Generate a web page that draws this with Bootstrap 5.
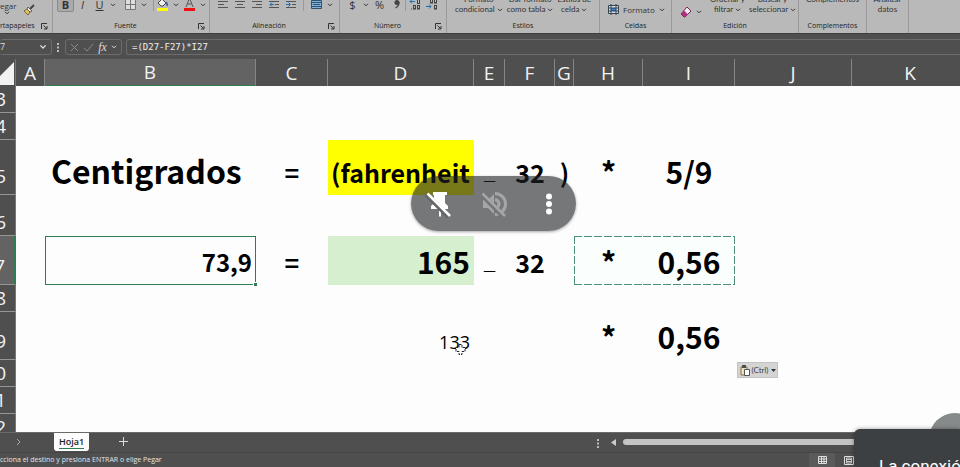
<!DOCTYPE html>
<html lang="es" data-bs-theme="light">
<head>
<meta charset="utf-8">
<meta name="viewport" content="width=device-width, initial-scale=1">
<title>Hoja1</title>
<link href="https://cdn.jsdelivr.net/npm/bootstrap@5.3.0/dist/css/bootstrap.min.css" rel="stylesheet">
<style>
  body { font-family: "Open Sans", "Noto Sans", sans-serif; background: #4f4f4f; }
  button { padding: 0; border: 0; background: none; color: inherit; line-height: 1; }
  svg { display: block; flex: none; }

  .ribbon { height: 34px; background: #b9b9b9; color: #333; font-size: 8px; line-height: 10px; }
  .rgroup { border-right: 1px solid #9a9a9a; flex: none; }
  .rgroup-name { height: 14px; flex: none; font-size: 7px; line-height: 14px; color: #222; }
  .launch { width: 11px; }
  .tools { height: 22px; flex: none; }
  .tool, .drop { height: 15px; display: flex; align-items: center; justify-content: center; font-size: 11px; }
  .tool { width: 17px; }
  .tool.on { background: #aaa; border: 1px solid #8a8a8a; border-radius: 2px; font-weight: 700; }
  .drop { width: 10px; }
  .split { width: 1px; height: 14px; background: #9a9a9a; }
  .big { flex: none; text-align: center; white-space: nowrap; font-family: Lato, sans-serif; line-height: 10px; height: 30px; }
  .w-clip { width: 53px; } .w-font { width: 157px; } .w-align { width: 130px; } .w-num { width: 107px; }
  .w-style { width: 153px; } .w-cell { width: 72px; } .w-edit { width: 127px; } .w-add { width: 68px; } .w-data { width: 42px; }

  .fbar { height: 26px; padding: 6px 0 5px; border-top: 1px solid #3e3e3e; color: #ddd; }
  .fbox { border: 1px solid #6c6c6c; border-radius: 3px; height: 16px; }
  .namebox { width: 52px; border-left: 0; font-size: 9px; }
  .fx-box { width: 57px; }
  .fx { font: italic 400 12px "Liberation Serif", serif; }
  .formula { background: transparent; color: #f0f0f0; font: 9px "DejaVu Sans Mono", monospace; padding: 0 5px; min-width: 0; border-right: 0; border-radius: 3px 0 0 3px; }

  .grid-wrap { background: #fdfdfd; min-height: 0; }
  .sheet { table-layout: fixed; width: 100%; border-collapse: separate; border-spacing: 0; color: #000; }
  .sheet th { background: #4f4f4f; color: #f2f2f2; font-weight: 400; font-size: 19px; line-height: 26px; padding: 0; }
  .sheet thead th { height: 27px; text-align: center; border-right: 1px solid #858585; }
  .sheet thead th.sel { background: #636363; border-bottom: 1px solid #2d7d50; }
  .sheet thead th.last { padding-left: 8px; border: 0; }
  .sheet thead th.corner { border-right: 1px solid #777; }
  .sheet tbody th { border-bottom: 1px solid #969696; border-right: 1px solid #777; vertical-align: bottom; }
  .sheet tbody th.sel { background: #636363; border-right: 2px solid #2d7d50; }
  .rownum { display: flex; justify-content: flex-end; overflow: hidden; padding-right: 9px; line-height: 26px; height: 26px; }
  .tall .rownum { height: 31px; }
  .sheet td { padding: 0 4px; vertical-align: bottom; font-family: "Noto Sans CJK SC", sans-serif; font-weight: 700; line-height: 40px; white-space: nowrap; }
  .r27 { height: 27px; } .r41 { height: 41px; } .r48 { height: 48px; } .r49 { height: 49px; } .r55 { height: 55px; }
  .c-head { width: 16px; } .c-a { width: 29px; } .c-b { width: 211px; } .c-c { width: 72px; } .c-d { width: 146px; }
  .c-e { width: 31px; } .c-f { width: 50px; } .c-g { width: 19px; } .c-h { width: 69px; } .c-i { width: 92px; } .c-j { width: 117px; }
  .sheet td.t32 { font-size: 32px; padding: 0 4px 5px 6px; }
  .sheet td.t30 { font-size: 30px; padding-bottom: 4px; }
  .sheet td.t25 { font-size: 25px; padding-bottom: 3px; }
  .sheet td.under { font-family: "Liberation Sans", sans-serif; font-size: 20px; padding-bottom: 3px; }
  .sheet td.plain { font-family: "Open Sans", sans-serif; font-weight: 400; font-size: 18px; line-height: 36px; }
  .sheet td.yellow { background: #ff0; padding-left: 3px; }
  .sheet td.green { background: #d6f0cf; }
  .sheet td.active { box-shadow: inset 0 0 0 1px #2d7d50; position: relative; font-size: 24px; }
  .grip { position: absolute; right: -1px; bottom: -1px; width: 4px; height: 4px; background: #2d7d50; border: 1px solid #fdfdfd; border-width: 1px 0 0 1px; }
  .sheet td.copy-l, .sheet td.copy-r {
    --dx: repeating-linear-gradient(90deg, #4f9074 0 8px, transparent 8px 10px);
    --dy: repeating-linear-gradient(180deg, #4f9074 0 8px, transparent 8px 10px);
    background-color: #fafefd; background-repeat: no-repeat;
    background-image: var(--dx), var(--dx), var(--dy);
    background-size: 100% 1px, 100% 1px, 1px 100%;
  }
  .sheet td.copy-l { background-position: top, bottom, left; }
  .sheet td.copy-r { background-position: top, bottom, right; }

  .meet { position: absolute; left: 411px; top: 176px; width: 165px; height: 55px; border-radius: 28px; background: rgba(32, 34, 37, .61); box-shadow: 0 1px 3px rgba(0, 0, 0, .35); color: #fff; }
  .paste { position: absolute; left: 737px; top: 362px; width: 41px; height: 16px; background: #d4d4d4; border: 1px solid #c2c2c2; color: #444; font-family: Lato, sans-serif; font-size: 8px; gap: 2px; }
  .pointer { position: absolute; left: 455px; top: 343px; }

  .tabs { height: 21px; border-top: 1px solid #6a6a6a; color: #ddd; }
  .tabs > button { height: 18px; }
  .tabs > .tab-on { width: 35px; margin: 0 30px 0 32px; background: #fdfdfd; color: #222; border-radius: 0 0 3px 3px; font-size: 9px; font-weight: 600; }
  .tab-on span { border-bottom: 1px solid #2d7d50; line-height: 13px; }
  .hscroll { width: 364px; padding: 6px 106px 0 0; }
  .thumb { height: 6px; background: #c4c4c4; border-radius: 3px 0 0 3px; }
  .status { height: 15px; border-top: 1px solid #454545; color: #e4e4e4; font-size: 7px; line-height: 14px; }
  .views { padding-right: 106px; gap: 9px; }
  .view-on { background: #5a5a5a; width: 26px; height: 14px; }
  .toast-box { position: absolute; right: 0; bottom: 0; width: 106px; height: 38px; background: #3c4043; border-radius: 6px 0 0 0; color: #fff; font: 17px/20px Roboto, sans-serif; padding: 27px 0 0 25px; box-shadow: 0 0 4px rgba(0, 0, 0, .4); }
  .bubble { position: absolute; right: -21px; bottom: 2px; width: 52px; height: 52px; border-radius: 50%; background: #868a8b; }
</style>
<script src="https://cdn.jsdelivr.net/npm/bootstrap@5.3.0/dist/js/bootstrap.bundle.min.js"></script>
</head>
<body class="m-0 overflow-hidden">
<svg width="0" height="0" class="position-absolute" aria-hidden="true">
  <symbol id="chev" viewBox="0 0 6 4"><path d="M1 .8 3 2.8 5 .8" fill="none" stroke="currentColor"/></symbol>
  <symbol id="launch" viewBox="0 0 7 7"><path d="M.5 6V.5H6M2.5 2.5l3 3M6 3v3H3" fill="none" stroke="#333"/></symbol>
</svg>
<div class="d-flex flex-column vh-100 position-relative overflow-hidden">

  <header class="ribbon d-flex overflow-hidden">
    <section class="rgroup w-clip d-flex flex-column justify-content-end">
      <div class="tools d-flex align-items-center">
        <div class="d-flex flex-column align-items-start">
          <span>egar</span>
          <svg class="ms-1" width="6" height="4"><use href="#chev"/></svg>
        </div>
        <button class="tool ms-1 mt-1" aria-label="Copiar formato"><svg width="12" height="12" viewBox="0 0 12 12"><path d="M11 1 7 5" stroke="#444" stroke-width="2"/><path d="m5 3 4 4-2 1-3-3z" fill="#eee" stroke="#444" stroke-width=".8"/><path d="M4 5 1 7l4 4 2-3z" fill="#e0c060" stroke="#665522" stroke-width=".8"/></svg></button>
      </div>
      <div class="rgroup-name d-flex align-items-center"><span class="flex-fill">rtapapeles</span><button class="launch" aria-label="Portapapeles"><svg width="7" height="7"><use href="#launch"/></svg></button></div>
    </section>

    <section class="rgroup w-font d-flex flex-column justify-content-end">
      <div class="tools d-flex align-items-start ps-1">
        <button class="tool on">B</button><button class="tool fst-italic">I</button><button class="tool text-decoration-underline">U</button>
        <button class="drop" aria-label="Subrayado"><svg width="6" height="4"><use href="#chev"/></svg></button>
        <button class="tool ms-1" aria-label="Bordes"><svg width="11" height="11" viewBox="0 0 11 11"><path d="M.5 .5h10v10H.5zM5.500 .5v10M.5 5.500h10" fill="#ddd" stroke="#777"/></svg></button>
        <button class="drop" aria-label="Más bordes"><svg width="6" height="4"><use href="#chev"/></svg></button>
        <span class="split ms-1"></span>
        <button class="tool" aria-label="Color de relleno"><svg width="12" height="13" viewBox="0 0 12 13"><path d="m5 1 4 4-3 3H4L1 5z" fill="#eee" stroke="#444"/><path d="M9 4q2 2 1 4" fill="none" stroke="#27609a" stroke-width="1.500"/><path d="M0 10h11v3H0z" fill="#ff0"/></svg></button>
        <button class="drop" aria-label="Más colores"><svg width="6" height="4"><use href="#chev"/></svg></button>
        <button class="tool" aria-label="Color de fuente"><svg width="12" height="13" viewBox="0 0 12 13"><path d="M2 9 5.500 0 9 9M3.500 6h4" fill="none" stroke="#555"/><path d="M0 10h11v3H0z" fill="#f01010"/></svg></button>
        <button class="drop" aria-label="Más colores de fuente"><svg width="6" height="4"><use href="#chev"/></svg></button>
      </div>
      <div class="rgroup-name d-flex align-items-center"><span class="flex-fill text-center">Fuente</span><button class="launch" aria-label="Fuente"><svg width="7" height="7"><use href="#launch"/></svg></button></div>
    </section>

    <section class="rgroup w-align d-flex flex-column justify-content-end">
      <div class="tools d-flex align-items-start ps-1">
        <button class="tool" aria-label="Izquierda"><svg width="10" height="9" viewBox="0 0 10 9"><path d="M0 1.500h10M0 4.500h6M0 7.500h10" stroke="#555"/></svg></button>
        <button class="tool" aria-label="Centrar"><svg width="10" height="9" viewBox="0 0 10 9"><path d="M0 1.500h10M2 4.500h6M0 7.500h10" stroke="#555"/></svg></button>
        <button class="tool" aria-label="Derecha"><svg width="10" height="9" viewBox="0 0 10 9"><path d="M0 1.500h10M4 4.500h6M0 7.500h10" stroke="#555"/></svg></button>
        <button class="tool" aria-label="Disminuir sangría"><svg width="10" height="9" viewBox="0 0 10 9"><path d="M0 1.500h10M6 4.500h4M0 7.500h10" stroke="#555"/><path d="M5 4.500H1M3 2.500l-2 2 2 2" fill="none" stroke="#1f6fb5"/></svg></button>
        <button class="tool" aria-label="Aumentar sangría"><svg width="10" height="9" viewBox="0 0 10 9"><path d="M0 1.500h10M6 4.500h4M0 7.500h10" stroke="#555"/><path d="M0 4.500h4M2.500 2.500l2 2-2 2" fill="none" stroke="#1f6fb5"/></svg></button>
        <span class="split ms-1"></span>
        <button class="tool ms-1" aria-label="Combinar"><svg width="11" height="10" viewBox="0 0 11 10"><path d="M.5 .5h10v8H.5z" fill="#7fb2df" stroke="#33526e"/><path d="M2 4.500h7M.5 2.500h10M.5 6.500h10" stroke="#33526e"/></svg></button>
        <button class="drop" aria-label="Más combinar"><svg width="6" height="4"><use href="#chev"/></svg></button>
      </div>
      <div class="rgroup-name d-flex align-items-center"><span class="flex-fill text-center">Alineación</span><button class="launch" aria-label="Alineación"><svg width="7" height="7"><use href="#launch"/></svg></button></div>
    </section>

    <section class="rgroup w-num d-flex flex-column justify-content-end">
      <div class="tools d-flex align-items-start ps-1">
        <button class="tool">$</button><button class="drop" aria-label="Moneda"><svg width="6" height="4"><use href="#chev"/></svg></button>
        <button class="tool">%</button><button class="tool" aria-label="Millares"><svg width="6" height="9" viewBox="0 0 6 9"><circle cx="3" cy="2.500" r="2.500" fill="#444"/><path d="M5 2.500Q5 6 1.500 8" fill="none" stroke="#444" stroke-width="1.300"/></svg></button>
        <span class="split"></span>
        <button class="tool" aria-label="Aumentar decimales"><svg width="12" height="11" viewBox="0 0 12 11"><path d="M6 2.500H1M3 .5l-2 2 2 2" fill="none" stroke="#1f6fb5"/><g fill="none" stroke="#444"><rect x="8.500" y=".5" width="2" height="4"/><rect x="4.500" y="6.500" width="2" height="3.500"/><rect x="8.500" y="6.500" width="2" height="3.500"/><path d="M2 10h1"/></g></svg></button>
        <button class="tool" aria-label="Disminuir decimales"><svg width="12" height="11" viewBox="0 0 12 11"><path d="M0 7.500h5M3 5.500l2 2-2 2" fill="none" stroke="#1f6fb5"/><g fill="none" stroke="#444"><rect x="4.500" y=".5" width="2" height="3.500"/><rect x="8.500" y=".5" width="2" height="3.500"/><rect x="8.500" y="6.500" width="2" height="3.500"/></g></svg></button>
      </div>
      <div class="rgroup-name d-flex align-items-center"><span class="flex-fill text-center">Número</span><button class="launch" aria-label="Número"><svg width="7" height="7"><use href="#launch"/></svg></button></div>
    </section>

    <section class="rgroup w-style d-flex flex-column justify-content-end">
      <div class="d-flex justify-content-center gap-1">
        <button class="big">Formato<br>condicional <svg class="d-inline" width="6" height="4"><use href="#chev"/></svg></button>
        <button class="big">Dar formato<br>como tabla <svg class="d-inline" width="6" height="4"><use href="#chev"/></svg></button>
        <button class="big">Estilos de<br>celda <svg class="d-inline" width="6" height="4"><use href="#chev"/></svg></button>
      </div>
      <div class="rgroup-name text-center">Estilos</div>
    </section>

    <section class="rgroup w-cell d-flex flex-column justify-content-end">
      <button class="d-flex align-items-center ps-2 gap-1 pb-1"><svg width="11" height="11" viewBox="0 0 11 11"><path d="M.5 1.500h10v8H.5z" fill="#ddd" stroke="#345"/><path d="M3 4h5v3H3z" fill="#2f7fd0"/><path d="M.5 4h10M.5 7h10M3 0v11M8 0v11" fill="none" stroke="#345"/></svg>Formato <svg width="6" height="4"><use href="#chev"/></svg></button>
      <div class="rgroup-name text-center">Celdas</div>
    </section>

    <section class="rgroup w-edit d-flex flex-column justify-content-end">
      <div class="d-flex gap-1 ps-1">
        <button class="d-flex align-items-center gap-1 pt-3 ms-1" aria-label="Borrar"><svg width="12" height="12" viewBox="0 0 12 12"><path d="m7 1 4 4-6 6H4L1 8z" fill="#eee" stroke="#7b2259"/><path d="m4 4.500 4 4L5 11H4L1 8z" fill="#b02f80"/></svg><svg width="6" height="4"><use href="#chev"/></svg></button>
        <button class="big ms-1">Ordenar y<br>filtrar <svg class="d-inline" width="6" height="4"><use href="#chev"/></svg></button>
        <button class="big">Buscar y<br>seleccionar <svg class="d-inline" width="6" height="4"><use href="#chev"/></svg></button>
      </div>
      <div class="rgroup-name text-center">Edición</div>
    </section>

    <section class="rgroup w-add d-flex flex-column justify-content-end">
      <button class="big">Complementos<br>&nbsp;</button>
      <div class="rgroup-name text-center">Complementos</div>
    </section>
    <section class="rgroup w-data d-flex flex-column justify-content-end">
      <button class="big">Analizar<br>datos</button>
      <div class="rgroup-name"></div>
    </section>
  </header>

  <div class="fbar d-flex align-items-center">
    <div class="fbox namebox d-flex align-items-center justify-content-between pe-1"><span>7</span><svg width="8" height="6"><use href="#chev"/></svg></div>
    <svg class="mx-1" width="5" height="9" viewBox="0 0 5 9"><path d="M1 0h2v2H1zM1 3.500h2v2H1zM1 7h2v2H1z" fill="#bbb"/></svg>
    <div class="fbox fx-box d-flex align-items-center justify-content-between px-1">
      <svg width="9" height="9" viewBox="0 0 9 9"><path d="m1 1 7 7M8 1 1 8" stroke="#8a8a8a"/></svg>
      <svg width="11" height="9" viewBox="0 0 11 9"><path d="m1 5 3 3 6-7" fill="none" stroke="#8a8a8a"/></svg>
      <span class="fx">fx</span><svg width="6" height="4"><use href="#chev"/></svg>
    </div>
    <input class="fbox formula flex-fill ms-1" aria-label="Barra de fórmulas" value="=(D27-F27)*I27">
  </div>

  <main class="grid-wrap flex-fill overflow-hidden">
    <table class="sheet">
      <colgroup><col class="c-head"><col class="c-a"><col class="c-b"><col class="c-c"><col class="c-d"><col class="c-e"><col class="c-f"><col class="c-g"><col class="c-h"><col class="c-i"><col class="c-j"><col></colgroup>
      <thead><tr>
        <th class="corner"><svg width="15" height="26" viewBox="0 0 15 26"><path d="M14 2v23H0V16z" fill="#f2f2f2"/></svg></th>
        <th>A</th><th class="sel">B</th><th>C</th><th>D</th><th>E</th><th>F</th><th>G</th><th>H</th><th>I</th><th>J</th><th class="last">K</th>
      </tr></thead>
      <tbody>
        <tr class="r27"><th><div class="rownum">3</div></th><td colspan="11"></td></tr>
        <tr class="r27"><th><div class="rownum">4</div></th><td colspan="11"></td></tr>
        <tr class="r55 tall"><th><div class="rownum">5</div></th><td></td><td class="t32">Centigrados</td><td class="t25 text-center">=</td><td class="t25 yellow">(fahrenheit</td><td class="under text-center">_</td><td class="t25 text-center">32</td><td class="t25 text-center">)</td><td class="t30 text-center">*</td><td class="t30 text-center">5/9</td><td></td><td></td></tr>
        <tr class="r41"><th><div class="rownum">6</div></th><td colspan="11"></td></tr>
        <tr class="r49 tall"><th class="sel"><div class="rownum">7</div></th><td></td><td class="t25 active text-end">73,9<span class="grip"></span></td><td class="t25 text-center">=</td><td class="t30 green text-end">165</td><td class="under text-center">_</td><td class="t25 text-center">32</td><td></td><td class="t30 copy-l text-center">*</td><td class="t30 copy-r text-center">0,56</td><td></td><td></td></tr>
        <tr class="r27"><th><div class="rownum">8</div></th><td colspan="11"></td></tr>
        <tr class="r48 tall"><th><div class="rownum">9</div></th><td colspan="3"></td><td class="plain text-end">133</td><td colspan="3"></td><td class="t30 text-center">*</td><td class="t30 text-center">0,56</td><td></td><td></td></tr>
        <tr class="r27"><th><div class="rownum">0</div></th><td colspan="11"></td></tr>
        <tr class="r27"><th><div class="rownum">1</div></th><td colspan="11"></td></tr>
        <tr class="r27"><th><div class="rownum">2</div></th><td colspan="11"></td></tr>
      </tbody>
    </table>
  </main>

  <nav class="tabs d-flex align-items-start">
    <button class="ms-3" aria-label="Hoja siguiente"><svg width="6" height="8" viewBox="0 0 6 8"><path d="m1 1 3 3-3 3" fill="none" stroke="#aaa"/></svg></button>
    <button class="tab-on d-flex justify-content-center align-items-center"><span>Hoja1</span></button>
    <button aria-label="Hoja nueva"><svg width="9" height="9" viewBox="0 0 9 9"><path d="M4.500 0v9M0 4.500h9" stroke="#ddd"/></svg></button>
    <div class="hscroll ms-auto d-flex align-items-start gap-1">
      <svg width="5" height="9" viewBox="0 0 5 9"><path d="M1 0h2v2H1zM1 3.500h2v2H1zM1 7h2v2H1z" fill="#bbb"/></svg>
      <svg width="14" height="7" viewBox="2 0 14 7"><path d="M13 0v7L8 3.500z" fill="#ccc"/></svg>
      <div class="thumb flex-fill"></div>
    </div>
  </nav>
  <footer class="status d-flex">
    <span>cciona el destino y presiona ENTRAR o elige Pegar</span>
    <div class="views ms-auto d-flex align-items-center">
      <button class="view-on d-flex justify-content-center align-items-center" aria-label="Normal"><svg width="9" height="8" viewBox="0 0 9 8"><path d="M.5 .5h8v7h-8zM3.500 0v8M6 0v8M0 3h9M0 5.500h9" fill="none" stroke="#ddd"/></svg></button>
      <button aria-label="Diseño de página"><svg width="10" height="9" viewBox="0 0 10 9"><path d="M.5 .5h9v8h-9z" fill="none" stroke="#ddd"/><path d="M2.500 2h5v5h-5zM3 3.500h4M3 5.500h4" fill="none" stroke="#ccc"/></svg></button>
    </div>
  </footer>

  <div class="meet d-flex align-items-center justify-content-around">
    <button aria-label="Quitar fijación"><svg width="28" height="28" viewBox="0 0 28 28"><path d="M8 2h14v3h-2v8l3 3v3h-7v7l-1 1-1-1v-7H6v-3l3-3V5H8z" fill="#fff"/><path d="M1 4 24 27" stroke="#65666a" stroke-width="5"/><path d="M2.500 3.500 25 26" stroke="#fff" stroke-width="2.500"/></svg></button>
    <button aria-label="Sonido desactivado"><svg width="28" height="28" viewBox="0 0 28 28"><g fill="none" stroke="#a5a6a8" stroke-width="3"><path d="M15 3.500a10.500 10.500 0 0 1 0 21"/><path d="M15 9.500q4 1 4 4.500t-4 4.500" /></g><path d="M3 10h5l6-6v20l-6-6H3z" fill="#a5a6a8"/><path d="M1 4 24 27" stroke="#757678" stroke-width="5"/><path d="M2.500 3.500 25 26" stroke="#a5a6a8" stroke-width="2.500"/></svg></button>
    <button aria-label="Más opciones"><svg width="28" height="28" viewBox="0 0 28 28"><g fill="#fff"><circle cx="14" cy="6.500" r="3"/><circle cx="14" cy="14" r="3"/><circle cx="14" cy="21.500" r="3"/></g></svg></button>
  </div>

  <svg class="pointer" width="11" height="13" viewBox="0 0 11 13"><path d="M4 1.500h3v3h3v4H7v3H4v-3H1v-4h3z" fill="#fff" stroke="#222" stroke-dasharray="2.500 1"/></svg>

  <button class="paste d-flex align-items-center justify-content-center"><svg width="10" height="11" viewBox="0 0 10 11"><path d="M1 2h6v8H1z" fill="#e8e0c8" stroke="#8a7430"/><path d="M2.500 .5h3v2h-3z" fill="#555" stroke="#444"/><path d="M4.500 4.500h5v6h-5z" fill="#fff" stroke="#555"/></svg>(Ctrl)<svg width="5" height="3" viewBox="0 0 5 3"><path d="M0 0h5L2.500 3z" fill="#333"/></svg></button>

  <div class="bubble"></div>
  <div class="toast-box overflow-hidden text-nowrap">La conexió</div>
</div>
</body>
</html>
